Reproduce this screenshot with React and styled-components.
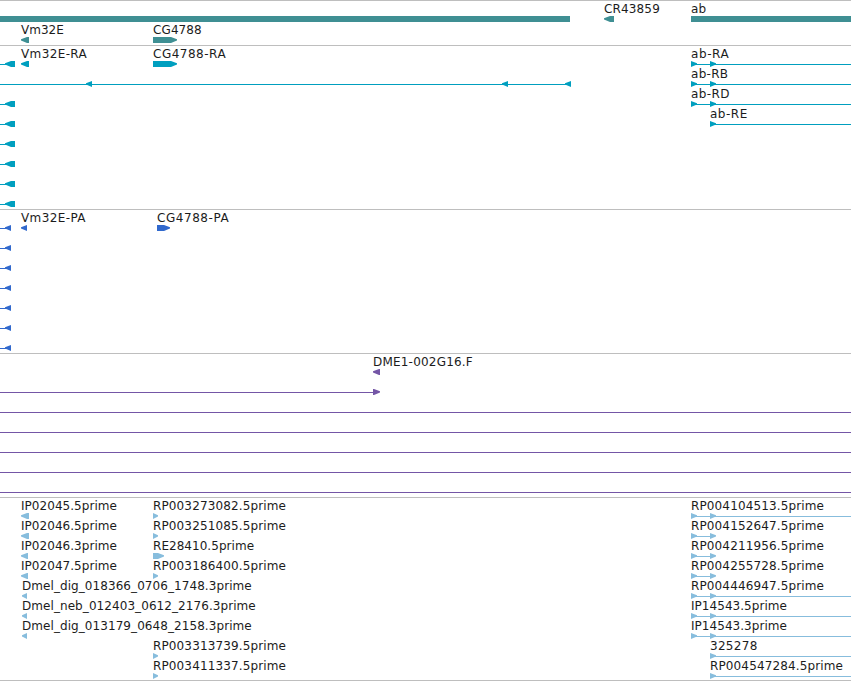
import styled, { createGlobalStyle } from "styled-components";

const GlobalStyle = createGlobalStyle`
  body {
    margin: 0;
    background: #fff;
    overflow: hidden;
  }
`;

const Browser = styled.main`
  display: flex;
  flex-direction: column;
  width: 851px;
  height: 681px;
  overflow: hidden;
  border-bottom: 1px solid #bebebe;
  box-sizing: border-box;
`;

const Track = styled.section`
  display: flex;
  flex-direction: column;
  gap: ${({ $gap }) => $gap || 0}px;
  padding-bottom: 3px;
  border-top: 1px solid #bebebe;
  color: ${({ $color }) => $color};
`;

const Row = styled.div`
  position: relative;
  flex: none;
  height: 20px;
`;

const Glyphs = styled.svg`
  display: block;
  width: 100%;
  height: 20px;
  fill: currentColor;
`;

// labels sit over the row at the start of their feature
const Label = styled.span`
  position: absolute;
  top: 1px;
  left: ${({ $x }) => $x}px;
  font: 12px/14px "DejaVu Sans", sans-serif;
  letter-spacing: ${({ $spacing }) => $spacing}px;
  color: #1c1c1c;
  white-space: nowrap;
`;

// y extent of an exon inside a row, and the intron line through it
const TOP = 15;
const BOTTOM = 21;
const LINE = 18;
const HEAD = 6;

function Box({ from, to, dir }) {
  const head = Math.min(to - from, HEAD);
  if (dir === "left") {
    const neck = from + head;
    return (
      <polygon
        points={`${from},17.2 ${from},18.6 ${neck},${BOTTOM} ${to},${BOTTOM} ${to},${TOP} ${neck},${TOP}`}
      />
    );
  }
  if (dir === "right") {
    const neck = to - head;
    return (
      <polygon
        points={`${to},17.2 ${to},18.6 ${neck},${BOTTOM} ${from},${BOTTOM} ${from},${TOP} ${neck},${TOP}`}
      />
    );
  }
  return <rect x={from} y={TOP} width={to - from} height={BOTTOM - TOP} />;
}

function FeatureRow({ labels = [], lines = [], boxes = [] }) {
  return (
    <Row>
      <Glyphs overflow="visible">
        {lines.map(([from, to]) => (
          <rect key={from} x={from} y={LINE} width={to - from} height="1" />
        ))}
        {boxes.map(([from, to, dir]) => (
          <Box key={from} from={from} to={to} dir={dir} />
        ))}
      </Glyphs>
      {labels.map(([x, text, spacing = 0.13]) => (
        <Label key={text} $x={x} $spacing={spacing}>
          {text}
        </Label>
      ))}
    </Row>
  );
}

const R = "right";
const L = "left";

const edgeExon = { lines: [[0, 6]], boxes: [[5, 15, L]] };
const edgeCds = { lines: [[0, 6]], boxes: [[5, 11, L]] };
const fullLine = { lines: [[0, 851]] };
const abStart = [
  [691, 697, R],
  [710, 716, R],
];

const tracks = [
  {
    color: "#3f8f93",
    gap: 1,
    rows: [
      {
        labels: [[604, "CR43859", 0.15], [691, "ab"]],
        boxes: [[0, 570], [604, 614, L], [691, 851]],
      },
      {
        labels: [[21, "Vm32E", 0], [153, "CG4788", 0.1]],
        boxes: [[21, 29, L], [153, 177, R]],
      },
    ],
  },
  {
    color: "#009fbf",
    rows: [
      {
        labels: [[21, "Vm32E-RA", 0.38], [153, "CG4788-RA", 0.5], [691, "ab-RA", 0.6]],
        lines: [[0, 6], [691, 851]],
        boxes: [[5, 15, L], [21, 29, L], [153, 177, R], ...abStart],
      },
      {
        labels: [[691, "ab-RB", 0.3]],
        lines: [[0, 570], [691, 851]],
        boxes: [[86, 92, L], [502, 508, L], [565, 571, L], ...abStart],
      },
      {
        labels: [[691, "ab-RD", 0.4]],
        lines: [[0, 6], [691, 851]],
        boxes: [[5, 15, L], ...abStart],
      },
      {
        labels: [[710, "ab-RE", 0.5]],
        lines: [[0, 6], [710, 851]],
        boxes: [[5, 15, L], [710, 716, R]],
      },
      edgeExon,
      edgeExon,
      edgeExon,
      edgeExon,
    ],
  },
  {
    color: "#3169cd",
    rows: [
      {
        labels: [[21, "Vm32E-PA", 0.4], [157, "CG4788-PA", 0.55]],
        lines: [[0, 6]],
        boxes: [[5, 11, L], [21, 27, L], [157, 170, R]],
      },
      edgeCds,
      edgeCds,
      edgeCds,
      edgeCds,
      edgeCds,
      edgeCds,
    ],
  },
  {
    color: "#7456a6",
    rows: [
      { labels: [[373, "DME1-002G16.F", 0.2]], boxes: [[373, 380, L]] },
      { lines: [[0, 374]], boxes: [[373, 380, R]] },
      fullLine,
      fullLine,
      fullLine,
      fullLine,
      fullLine,
    ],
  },
  {
    color: "#87bddd",
    rows: [
      {
        labels: [[21, "IP02045.5prime", 0.04], [153, "RP003273082.5prime"], [691, "RP004104513.5prime"]],
        lines: [[691, 851]],
        boxes: [[21, 29, L], [153, 158, R], ...abStart],
      },
      {
        labels: [[21, "IP02046.5prime", 0.04], [153, "RP003251085.5prime"], [691, "RP004152647.5prime"]],
        lines: [[691, 712]],
        boxes: [[21, 29, L], [153, 158, R], ...abStart],
      },
      {
        labels: [[21, "IP02046.3prime", 0.04], [153, "RE28410.5prime", 0.04], [691, "RP004211956.5prime"]],
        lines: [[691, 712]],
        boxes: [[21, 28, L], [153, 164, R], ...abStart],
      },
      {
        labels: [[21, "IP02047.5prime", 0.04], [153, "RP003186400.5prime"], [691, "RP004255728.5prime"]],
        lines: [[691, 712]],
        boxes: [[21, 28, L], [153, 158, R], ...abStart],
      },
      {
        labels: [[22, "Dmel_dig_018366_0706_1748.3prime", 0.07], [691, "RP004446947.5prime"]],
        lines: [[691, 851]],
        boxes: [[22, 27, L], ...abStart],
      },
      {
        labels: [[22, "Dmel_neb_012403_0612_2176.3prime", 0.07], [691, "IP14543.5prime", 0.04]],
        lines: [[691, 851]],
        boxes: [[22, 27, L], ...abStart],
      },
      {
        labels: [[22, "Dmel_dig_013179_0648_2158.3prime", 0.07], [691, "IP14543.3prime", 0.04]],
        lines: [[691, 851]],
        boxes: [[22, 27, L], ...abStart],
      },
      {
        labels: [[153, "RP003313739.5prime"], [710, "325278", 0.3]],
        lines: [[710, 851]],
        boxes: [[153, 158, R], [710, 716, R]],
      },
      {
        labels: [[153, "RP003411337.5prime"], [710, "RP004547284.5prime"]],
        lines: [[710, 851]],
        boxes: [[153, 158, R], [710, 716, R]],
      },
    ],
  },
];

export default function App() {
  return (
    <Browser>
      <GlobalStyle />
      {tracks.map((track) => (
        <Track key={track.color} $color={track.color} $gap={track.gap}>
          {track.rows.map((row, i) => (
            <FeatureRow key={i} {...row} />
          ))}
        </Track>
      ))}
    </Browser>
  );
}
